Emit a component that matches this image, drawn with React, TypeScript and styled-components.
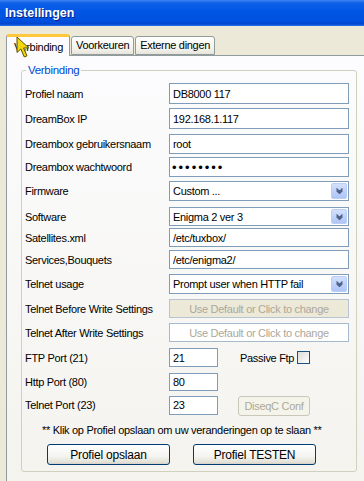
import styled, { createGlobalStyle } from "styled-components";

type RowSpec = {
  label: string;
  gap: number;
  height: number;
  kind: "text" | "password" | "combo" | "hint";
  value: string;
  disabled?: boolean;
};

const ROWS: Array<RowSpec> = [
  { label: "Profiel naam", gap: 0, height: 21, kind: "text", value: "DB8000 117" },
  { label: "DreamBox IP", gap: 4, height: 21, kind: "text", value: "192.168.1.117" },
  { label: "Dreambox gebruikersnaam", gap: 5, height: 20, kind: "text", value: "root" },
  { label: "Dreambox wachtwoord", gap: 3, height: 20, kind: "password", value: "dreambox" },
  { label: "Firmware", gap: 4, height: 20, kind: "combo", value: "Custom ..." },
  { label: "Software", gap: 6, height: 19, kind: "combo", value: "Enigma 2 ver 3" },
  { label: "Satellites.xml", gap: 2, height: 19, kind: "text", value: "/etc/tuxbox/" },
  { label: "Services,Bouquets", gap: 3, height: 19, kind: "text", value: "/etc/enigma2/" },
  { label: "Telnet usage", gap: 5, height: 20, kind: "combo", value: "Prompt user when HTTP fail" },
  { label: "Telnet Before Write Settings", gap: 5, height: 19, kind: "hint", value: "Use Default or Click to change", disabled: true },
  { label: "Telnet After Write Settings", gap: 5, height: 19, kind: "hint", value: "Use Default or Click to change" },
];

const GlobalStyle = createGlobalStyle`
  html, body {
    margin: 0;
    padding: 0;
  }
  body {
    width: 364px;
    height: 481px;
    overflow: hidden;
    background: #ECE9D8;
    font-family: "Liberation Sans", Arial, sans-serif;
    font-size: 11px;
    letter-spacing: -0.3px;
    color: #000;
  }
`;

function ComboArrow() {
  return (
    <svg width="7" height="6" viewBox="0 0 7 6">
      <path d="M0.5 0.5 L3.5 3.5 L6.5 0.5 M0.5 2.5 L3.5 5.5 L6.5 2.5" fill="none" stroke="#4D6185" strokeWidth="1.3" />
    </svg>
  );
}

function Cursor() {
  return (
    <CursorWrap width="14" height="23" viewBox="0 0 14 23">
      <path d="M1 1 L1 16.5 L4.8 13 L8.3 21 L11 19.8 L7.6 12 L12.8 12 Z" fill="#F2D60A" stroke="#5C4E00" strokeWidth="1" strokeLinejoin="round" />
    </CursorWrap>
  );
}

function FieldFor({ row }: { row: RowSpec }) {
  if (row.kind === "combo") {
    return (
      <Combo $h={row.height}>
        <ComboText>{row.value}</ComboText>
        <ComboButton>
          <ComboArrow />
        </ComboButton>
      </Combo>
    );
  }
  if (row.kind === "hint") {
    return (
      <Hint $h={row.height} $disabled={!!row.disabled}>
        {row.value}
      </Hint>
    );
  }
  if (row.kind === "password") {
    return <Password $h={row.height} type="password" defaultValue={row.value} />;
  }
  return <TextInput $h={row.height} type="text" defaultValue={row.value} />;
}

export default function App() {
  return (
    <>
      <GlobalStyle />
      <Window>
        <TitleBar>Instellingen</TitleBar>
        <TabStrip>
          <Tab $active>Verbinding</Tab>
          <Tab>Voorkeuren</Tab>
          <Tab>Externe dingen</Tab>
          <Cursor />
        </TabStrip>
        <Panel>
          <Group>
            <Legend>Verbinding</Legend>
            {ROWS.map((row) => (
              <Row key={row.label} $gap={row.gap}>
                <Label>{row.label}</Label>
                <FieldFor row={row} />
              </Row>
            ))}
            <PortRow $gap={6}>
              <Label>FTP Port (21)</Label>
              <PortInput $h={19} type="text" defaultValue="21" />
              <Passive>
                Passive Ftp
                <CheckBox />
              </Passive>
            </PortRow>
            <PortRow $gap={5}>
              <Label>Http Port (80)</Label>
              <PortInput $h={18} type="text" defaultValue="80" />
            </PortRow>
            <PortRow $gap={3}>
              <Label>Telnet Port (23)</Label>
              <PortInput $h={19} type="text" defaultValue="23" />
              <SmallButton disabled>DiseqC Conf</SmallButton>
            </PortRow>
            <Note>** Klik op Profiel opslaan om uw veranderingen op te slaan **</Note>
            <Buttons>
              <PushButton>Profiel opslaan</PushButton>
              <PushButton>Profiel TESTEN</PushButton>
            </Buttons>
          </Group>
        </Panel>
      </Window>
    </>
  );
}

const Window = styled.div`
  display: flex;
  flex-direction: column;
  width: 364px;
  height: 481px;
`;

const TitleBar = styled.div`
  height: 26px;
  box-sizing: border-box;
  padding: 6px 0 0 5px;
  color: #fff;
  font-weight: bold;
  font-size: 12.5px;
  letter-spacing: 0;
  text-shadow: 1px 1px 0 #0A1E7A;
  background: linear-gradient(
    #3D86F2 0,
    #0E5FE8 12%,
    #0056E4 45%,
    #0050DE 80%,
    #0046D0 92%,
    #2A72EC 100%
  );
`;

const TabStrip = styled.div`
  position: relative;
  display: flex;
  align-items: flex-end;
  height: 29px;
  padding-left: 6px;
  z-index: 1;
`;

const Tab = styled.div<{ $active?: boolean }>`
  box-sizing: border-box;
  height: ${(p) => (p.$active ? "22px" : "19px")};
  margin-bottom: ${(p) => (p.$active ? "-1px" : "0")};
  padding: ${(p) => (p.$active ? "4px 6px 0 7px" : "2px 4px 0 4px")};
  margin-right: 1px;
  border: 1px solid #919B9C;
  border-bottom: ${(p) => (p.$active ? "none" : "1px solid #919B9C")};
  border-top: ${(p) => (p.$active ? "3px solid #FFC83C" : "1px solid #919B9C")};
  border-radius: 3px 3px 0 0;
  background: ${(p) => (p.$active ? "#FCFCFE" : "linear-gradient(#FFFFFF, #F3F2ED 70%, #E6E4DA)")};
  font-size: 11px;
  white-space: nowrap;
`;

const CursorWrap = styled.svg`
  position: absolute;
  left: 16px;
  top: 10px;
`;

const Panel = styled.div`
  flex: 1;
  width: 362px;
  margin-left: 6px;
  box-sizing: border-box;
  padding: 8px 0 0 14px;
  border: 1px solid #919B9C;
  border-bottom: none;
  background: linear-gradient(#FCFCFE, #F4F3EE);
`;

const Group = styled.fieldset`
  width: 336px;
  box-sizing: border-box;
  margin: 0;
  padding: 6px 3px 6px 3px;
  border: 1px solid #D0D0BF;
  border-radius: 3px;
  display: flex;
  flex-direction: column;
`;

const Legend = styled.legend`
  margin-left: 1px;
  padding: 0 2px;
  color: #0046D5;
  font-size: 11.5px;
  line-height: 13px;
`;

const Row = styled.div<{ $gap: number }>`
  display: grid;
  grid-template-columns: 144px 180px;
  align-items: center;
  margin-top: ${(p) => p.$gap}px;
`;

const PortRow = styled.div<{ $gap: number }>`
  display: grid;
  grid-template-columns: 144px 49px auto;
  align-items: center;
  height: 19px;
  margin-top: ${(p) => p.$gap}px;
`;

const Label = styled.span`
  white-space: nowrap;
`;

const fieldBase = `
  box-sizing: border-box;
  width: 100%;
  margin: 0;
  border: 1px solid #7F9DB9;
  background: #fff;
  font-family: "Liberation Sans", Arial, sans-serif;
  font-size: 11px;
  letter-spacing: -0.3px;
  color: #000;
  outline: none;
`;

const TextInput = styled.input<{ $h: number }>`
  ${fieldBase}
  height: ${(p) => p.$h}px;
  padding: 0 3px;
`;

const Password = styled.input<{ $h: number }>`
  ${fieldBase}
  height: ${(p) => p.$h}px;
  padding: 0 2px;
  font-size: 13px;
  letter-spacing: 2px;
`;

const PortInput = styled(TextInput)`
  width: 49px;
`;

const Combo = styled.div<{ $h: number }>`
  ${fieldBase}
  height: ${(p) => p.$h}px;
  display: flex;
  align-items: center;
  padding: 1px;
`;

const ComboText = styled.span`
  flex: 1;
  padding-left: 2px;
  white-space: nowrap;
  overflow: hidden;
`;

const ComboButton = styled.span`
  width: 16px;
  align-self: stretch;
  box-sizing: border-box;
  display: flex;
  align-items: center;
  justify-content: center;
  border: 1px solid #B9CEF9;
  border-radius: 2px;
  background: linear-gradient(#D4E1FC, #BCCFF9 60%, #AFC5F6);
`;

const Hint = styled.div<{ $h: number; $disabled: boolean }>`
  ${fieldBase}
  height: ${(p) => p.$h}px;
  display: flex;
  align-items: center;
  justify-content: center;
  color: #ACA899;
  background: ${(p) => (p.$disabled ? "#ECE9D8" : "#fff")};
  border-color: ${(p) => (p.$disabled ? "#B8C4D2" : "#A5B9CF")};
`;

const Passive = styled.label`
  display: flex;
  align-items: center;
  gap: 3px;
  margin-left: 22px;
`;

const CheckBox = styled.span`
  width: 13px;
  height: 13px;
  box-sizing: border-box;
  border: 1px solid #1C5180;
  background: linear-gradient(135deg, #DCDCD7, #FFFFFF);
`;

const SmallButton = styled.button`
  width: 72px;
  height: 20px;
  margin: 2px 0 0 20px;
  padding: 0;
  border: 1px solid #C9C7BA;
  border-radius: 3px;
  background: #F5F4EA;
  color: #ACA899;
  font-family: "Liberation Sans", Arial, sans-serif;
  font-size: 11px;
  letter-spacing: -0.3px;
`;

const Note = styled.div`
  margin-top: 11px;
  padding-left: 17px;
  white-space: nowrap;
`;

const Buttons = styled.div`
  display: flex;
  gap: 23px;
  margin-top: 8px;
  padding-left: 22px;
`;

const PushButton = styled.button`
  width: 123px;
  height: 21px;
  padding: 0;
  border: 1px solid #003C74;
  border-radius: 3px;
  background: linear-gradient(#FFFFFF, #F4F4F0 60%, #E3E1D8 90%, #D6D0C5);
  color: #000;
  font-family: "Liberation Sans", Arial, sans-serif;
  font-size: 12px;
  letter-spacing: -0.2px;
`;
